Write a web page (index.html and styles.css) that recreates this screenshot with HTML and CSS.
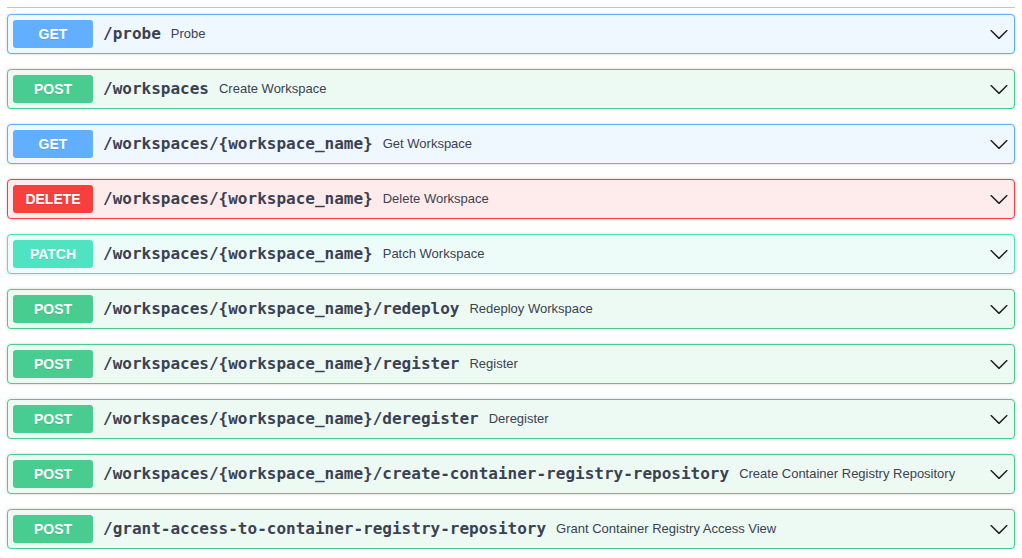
FILE: index.html
```html
<!DOCTYPE html>
<html>
<head>
<meta charset="utf-8">
<link rel="stylesheet" href="styles.css">
</head>
<body>
<div class="section">
  <div class="rule"></div>
  <div class="ops">
    <div class="op get"><span class="method">GET</span><span class="path">/probe</span><span class="desc">Probe</span><svg class="arrow" viewBox="0 0 20 20" width="20" height="20"><path d="M17.418 6.109c.272-.268.709-.268.979 0s.271.701 0 .969l-7.908 7.83c-.27.268-.707.268-.979 0l-7.908-7.83c-.27-.268-.27-.701 0-.969.271-.268.709-.268.979 0L10 13.25l7.418-7.141z"/></svg></div>
    <div class="op post"><span class="method">POST</span><span class="path">/workspaces</span><span class="desc">Create Workspace</span><svg class="arrow" viewBox="0 0 20 20" width="20" height="20"><path d="M17.418 6.109c.272-.268.709-.268.979 0s.271.701 0 .969l-7.908 7.83c-.27.268-.707.268-.979 0l-7.908-7.83c-.27-.268-.27-.701 0-.969.271-.268.709-.268.979 0L10 13.25l7.418-7.141z"/></svg></div>
    <div class="op get"><span class="method">GET</span><span class="path">/workspaces/{workspace_name}</span><span class="desc">Get Workspace</span><svg class="arrow" viewBox="0 0 20 20" width="20" height="20"><path d="M17.418 6.109c.272-.268.709-.268.979 0s.271.701 0 .969l-7.908 7.83c-.27.268-.707.268-.979 0l-7.908-7.83c-.27-.268-.27-.701 0-.969.271-.268.709-.268.979 0L10 13.25l7.418-7.141z"/></svg></div>
    <div class="op delete"><span class="method">DELETE</span><span class="path">/workspaces/{workspace_name}</span><span class="desc">Delete Workspace</span><svg class="arrow" viewBox="0 0 20 20" width="20" height="20"><path d="M17.418 6.109c.272-.268.709-.268.979 0s.271.701 0 .969l-7.908 7.83c-.27.268-.707.268-.979 0l-7.908-7.83c-.27-.268-.27-.701 0-.969.271-.268.709-.268.979 0L10 13.25l7.418-7.141z"/></svg></div>
    <div class="op patch"><span class="method">PATCH</span><span class="path">/workspaces/{workspace_name}</span><span class="desc">Patch Workspace</span><svg class="arrow" viewBox="0 0 20 20" width="20" height="20"><path d="M17.418 6.109c.272-.268.709-.268.979 0s.271.701 0 .969l-7.908 7.83c-.27.268-.707.268-.979 0l-7.908-7.83c-.27-.268-.27-.701 0-.969.271-.268.709-.268.979 0L10 13.25l7.418-7.141z"/></svg></div>
    <div class="op post"><span class="method">POST</span><span class="path">/workspaces/{workspace_name}/redeploy</span><span class="desc">Redeploy Workspace</span><svg class="arrow" viewBox="0 0 20 20" width="20" height="20"><path d="M17.418 6.109c.272-.268.709-.268.979 0s.271.701 0 .969l-7.908 7.83c-.27.268-.707.268-.979 0l-7.908-7.83c-.27-.268-.27-.701 0-.969.271-.268.709-.268.979 0L10 13.25l7.418-7.141z"/></svg></div>
    <div class="op post"><span class="method">POST</span><span class="path">/workspaces/{workspace_name}/register</span><span class="desc">Register</span><svg class="arrow" viewBox="0 0 20 20" width="20" height="20"><path d="M17.418 6.109c.272-.268.709-.268.979 0s.271.701 0 .969l-7.908 7.83c-.27.268-.707.268-.979 0l-7.908-7.83c-.27-.268-.27-.701 0-.969.271-.268.709-.268.979 0L10 13.25l7.418-7.141z"/></svg></div>
    <div class="op post"><span class="method">POST</span><span class="path">/workspaces/{workspace_name}/deregister</span><span class="desc">Deregister</span><svg class="arrow" viewBox="0 0 20 20" width="20" height="20"><path d="M17.418 6.109c.272-.268.709-.268.979 0s.271.701 0 .969l-7.908 7.83c-.27.268-.707.268-.979 0l-7.908-7.83c-.27-.268-.27-.701 0-.969.271-.268.709-.268.979 0L10 13.25l7.418-7.141z"/></svg></div>
    <div class="op post"><span class="method">POST</span><span class="path">/workspaces/{workspace_name}/create-container-registry-repository</span><span class="desc">Create Container Registry Repository</span><svg class="arrow" viewBox="0 0 20 20" width="20" height="20"><path d="M17.418 6.109c.272-.268.709-.268.979 0s.271.701 0 .969l-7.908 7.83c-.27.268-.707.268-.979 0l-7.908-7.83c-.27-.268-.27-.701 0-.969.271-.268.709-.268.979 0L10 13.25l7.418-7.141z"/></svg></div>
    <div class="op post"><span class="method">POST</span><span class="path">/grant-access-to-container-registry-repository</span><span class="desc">Grant Container Registry Access View</span><svg class="arrow" viewBox="0 0 20 20" width="20" height="20"><path d="M17.418 6.109c.272-.268.709-.268.979 0s.271.701 0 .969l-7.908 7.83c-.27.268-.707.268-.979 0l-7.908-7.83c-.27-.268-.27-.701 0-.969.271-.268.709-.268.979 0L10 13.25l7.418-7.141z"/></svg></div>
  </div>
</div>
</body>
</html>
```
FILE: styles.css
```css
html, body {
  margin: 0;
  padding: 0;
  background: #ffffff;
}
body {
  font-family: "Liberation Sans", Arial, sans-serif;
  color: #3b4151;
}
.section {
  padding: 7px 7px 0 7px;
}
.rule {
  height: 1px;
  background: #c4c6cb;
  margin-bottom: 6px;
}
.ops {
  display: flex;
  flex-direction: column;
  gap: 15px;
}
.op {
  display: flex;
  align-items: center;
  padding: 5px;
  border: 1px solid;
  border-radius: 4px;
  box-shadow: 0 0 3px rgba(0, 0, 0, 0.19);
}
.method {
  flex: none;
  width: 80px;
  padding: 6px 0;
  line-height: 16px;
  font-size: 14px;
  font-weight: 700;
  text-align: center;
  color: #ffffff;
  border-radius: 3px;
  text-shadow: 0 1px 0 rgba(0, 0, 0, 0.1);
}
.path {
  flex: none;
  padding: 0 10px;
  font-family: "DejaVu Sans Mono", monospace;
  font-size: 16px;
  font-weight: 700;
  color: #3b4151;
  line-height: 18px;
}
.desc {
  flex: 1;
  font-size: 13px;
  color: #3b4151;
  margin-bottom: 2px;
}
.arrow {
  flex: none;
  fill: #1f1f1f;
}
.get { border-color: #61affe; background: #eff7ff; }
.get .method { background: #61affe; }
.post { border-color: #49cc90; background: #edfaf4; }
.post .method { background: #49cc90; }
.delete { border-color: #f93e3e; background: #feecec; }
.delete .method { background: #f93e3e; }
.patch { border-color: #50e3c2; background: #edfcf9; }
.patch .method { background: #50e3c2; }
```
